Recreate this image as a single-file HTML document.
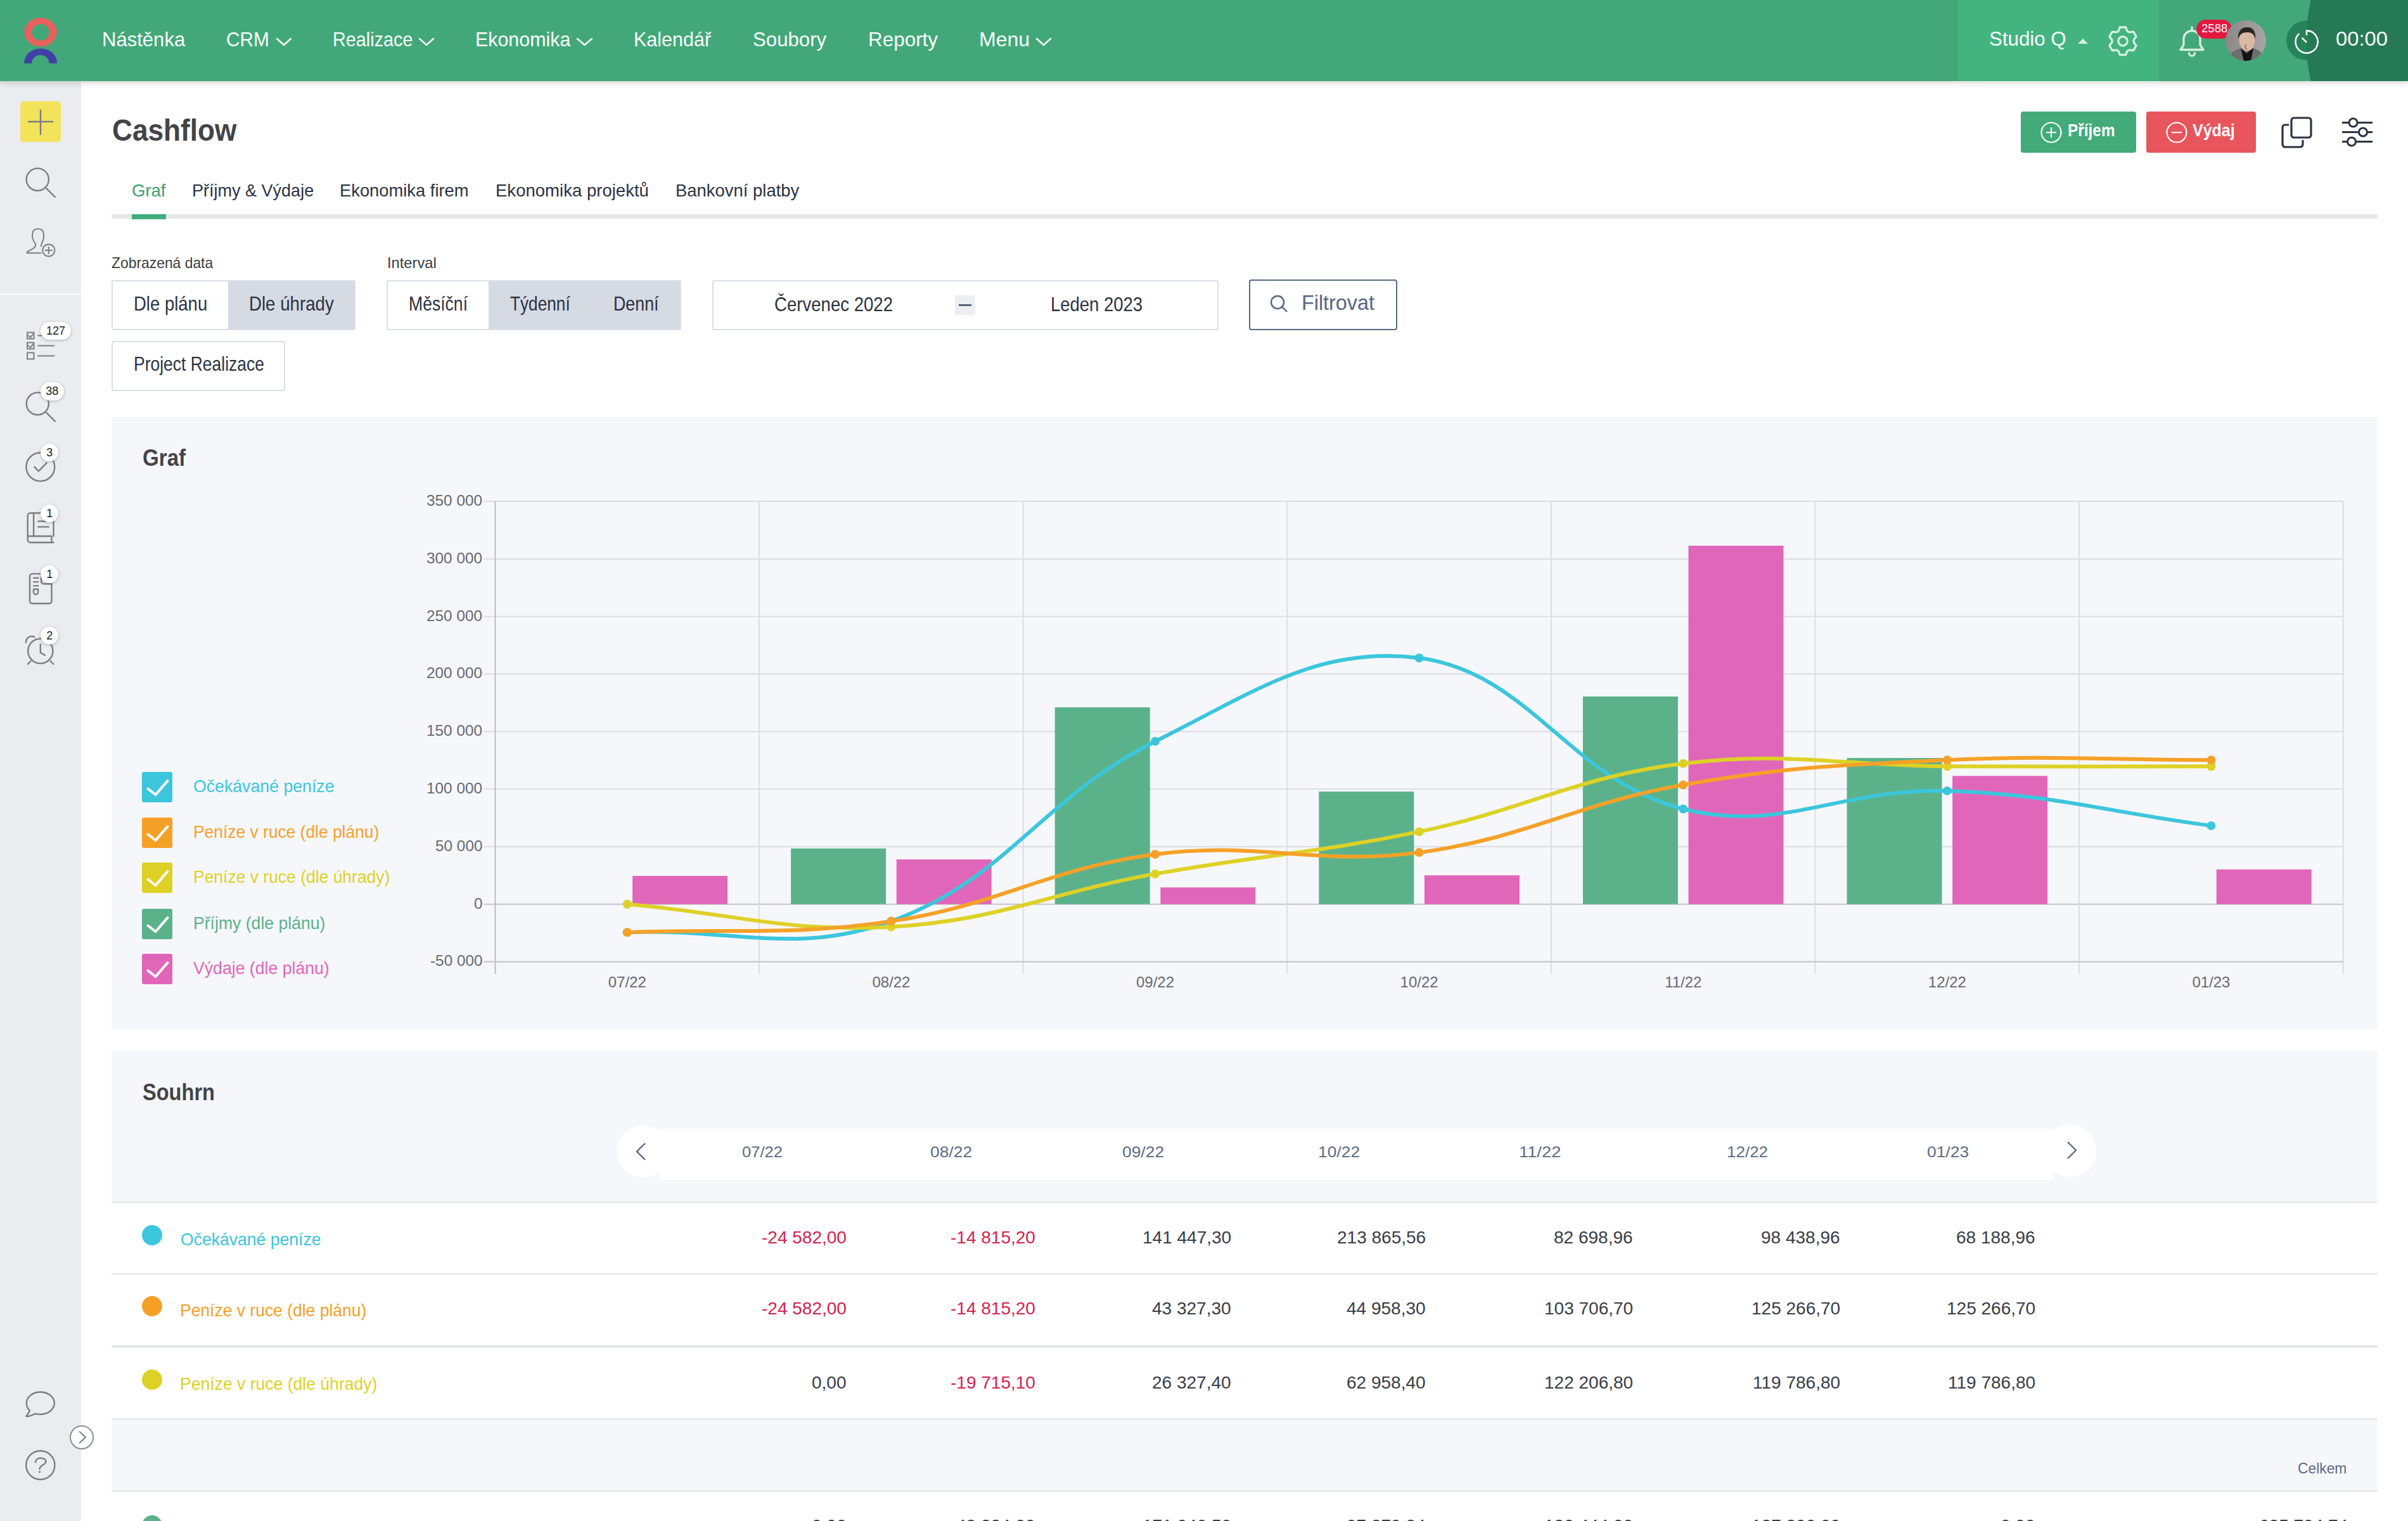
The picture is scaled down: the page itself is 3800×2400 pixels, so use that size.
<!DOCTYPE html><html><head><meta charset="utf-8"><style>
*{box-sizing:border-box;margin:0;padding:0}
html,body{width:3800px;height:2400px;overflow:hidden;background:#fff;font-family:"Liberation Sans",sans-serif;position:relative}
.a{position:absolute}
.t{position:absolute;white-space:nowrap;line-height:1.117;transform-origin:0 0}
@media (max-width:2000px){html{zoom:0.5}}
</style></head><body><div class="a" style="left:0;top:0;width:3800px;height:128px;background:#42a879;box-shadow:0 3px 9px rgba(0,0,0,0.16);z-index:2"></div>
<div class="a" style="left:3090px;top:0;width:316px;height:128px;background:#43b47f;z-index:2"></div>
<svg class="a" style="left:3580px;top:0;z-index:2" width="220" height="128"><circle cx="59.2" cy="63.7" r="31.2" fill="#278259"/><path d="M66.4,0 L61.3,30 L61.3,98 L66.4,128 H220 V0Z" fill="#257955"/></svg>
<div style="position:absolute;left:0;top:0;width:3800px;height:128px;z-index:3">
<svg class="a" style="left:0;top:0" width="128" height="128"><path fill="#e8615e" fill-rule="evenodd" d="M38.3,50.7 a25.7,22.8 0 1,0 51.4,0 a25.7,22.8 0 1,0 -51.4,0 Z M50.3,50.9 a13.7,13 0 1,0 27.4,0 a13.7,13 0 1,0 -27.4,0 Z"/><path fill="#4040a6" d="M38.2,100 L38.2,99 A25.9,22.5 0 0,1 90,99 L90,100 L77.4,100 L77.4,99.5 A13.6,12.8 0 0,0 50.2,99.5 L50.2,100 Z"/></svg>
<div class="t" style="left:161.0px;top:45.0px;font-size:32px;color:#ffffff;transform:scaleX(0.9704);">Nástěnka</div>
<div class="t" style="left:357.0px;top:45.0px;font-size:32px;color:#ffffff;transform:scaleX(0.9315);">CRM</div>
<svg class="a" style="left:433px;top:57px" width="30" height="18"><path d="M4,4 L15.0,14 L26,4" fill="none" stroke="#ffffff" stroke-width="2.5" stroke-linecap="round" stroke-linejoin="round"/></svg>
<div class="t" style="left:525.0px;top:45.0px;font-size:32px;color:#ffffff;transform:scaleX(0.9007);">Realizace</div>
<svg class="a" style="left:658px;top:57px" width="30" height="18"><path d="M4,4 L15.0,14 L26,4" fill="none" stroke="#ffffff" stroke-width="2.5" stroke-linecap="round" stroke-linejoin="round"/></svg>
<div class="t" style="left:750.0px;top:45.0px;font-size:32px;color:#ffffff;transform:scaleX(0.9497);">Ekonomika</div>
<svg class="a" style="left:907px;top:57px" width="31" height="18"><path d="M4,4 L15.5,14 L27,4" fill="none" stroke="#ffffff" stroke-width="2.5" stroke-linecap="round" stroke-linejoin="round"/></svg>
<div class="t" style="left:1000.0px;top:45.0px;font-size:32px;color:#ffffff;transform:scaleX(0.9535);">Kalendář</div>
<div class="t" style="left:1188.0px;top:45.0px;font-size:32px;color:#ffffff;transform:scaleX(0.9748);">Soubory</div>
<div class="t" style="left:1370.0px;top:45.0px;font-size:32px;color:#ffffff;transform:scaleX(0.9821);">Reporty</div>
<div class="t" style="left:1545.0px;top:45.0px;font-size:32px;color:#ffffff;transform:scaleX(1.0000);">Menu</div>
<svg class="a" style="left:1632px;top:57px" width="30" height="18"><path d="M4,4 L15.0,14 L26,4" fill="none" stroke="#ffffff" stroke-width="2.5" stroke-linecap="round" stroke-linejoin="round"/></svg>
<div class="t" style="left:3139.0px;top:44.0px;font-size:32px;color:#ffffff;transform:scaleX(0.9760);">Studio Q</div>
<svg class="a" style="left:3279px;top:61px" width="16" height="8"><path d="M0,8 L8,0 L16,8Z" fill="#d8f0e2"/></svg>
<svg class="a" style="left:3310px;top:24px" width="80" height="80"><path d="M32.99,25.14 L35.57,18.99 L44.43,18.99 L47.01,25.14 A16.5,16.5 0 0 1 50.09,26.92 L56.71,26.09 L61.14,33.76 L57.11,39.07 A16.5,16.5 0 0 1 57.11,42.63 L61.14,47.94 L56.71,55.61 L50.09,54.78 A16.5,16.5 0 0 1 47.01,56.56 L44.43,62.71 L35.57,62.71 L32.99,56.56 A16.5,16.5 0 0 1 29.91,54.78 L23.29,55.61 L18.86,47.94 L22.89,42.63 A16.5,16.5 0 0 1 22.89,39.07 L18.86,33.76 L23.29,26.09 L29.91,26.92 A16.5,16.5 0 0 1 32.99,25.14Z" fill="none" stroke="#d8f0e2" stroke-width="3.3" stroke-linejoin="round"/><circle cx="40" cy="40.85" r="7.2" fill="none" stroke="#d8f0e2" stroke-width="3.3"/></svg>
<svg class="a" style="left:3432px;top:38px" width="54" height="54" viewBox="0 0 24 24"><path fill="none" stroke="#d8f0e2" stroke-width="1.45" stroke-linecap="round" stroke-linejoin="round" d="M12 2.2v1.3M6.2 10.5a5.8 5.8 0 0 1 11.6 0v4.2l2.2 3.3H4l2.2-3.3z M10 20.3a2 2 0 0 0 4 0"/></svg>
<div class="a" style="left:3466px;top:31px;width:56px;height:30px;border-radius:15px;background:#e3173f"></div>
<div class="t" style="left:3474.0px;top:33.8px;font-size:19px;color:#ffffff;transform:scaleX(0.9762);">2588</div>
<svg class="a" style="left:3512px;top:32px" width="64" height="64"><defs><clipPath id="av"><circle cx="32" cy="32" r="32"/></clipPath><linearGradient id="avg" x1="0" x2="1"><stop offset="0" stop-color="#8a8888"/><stop offset="1" stop-color="#a9a5a4"/></linearGradient></defs><g clip-path="url(#av)"><rect width="64" height="64" fill="url(#avg)"/><path d="M2,64 C6,52 14,47 24,44 L33,50 L44,44 C54,47 60,52 62,64Z" fill="#6e6e6e"/><path d="M24,44 L29,64 L40,64 L44,44 L33,52Z" fill="#121212"/><ellipse cx="34" cy="31" rx="12.5" ry="17" fill="#d9b9a4"/><path d="M33,38 C30,42 30,44 34,45" fill="none" stroke="#8a6a58" stroke-width="1.5"/><path d="M20,30 C19,16 26,11 34,11 C43,11 48,17 47,30 C45,22 42,19 34,19 C27,19 22,22 20,30Z" fill="#2b2421"/></g></svg>
<svg class="a" style="left:3616px;top:42px" width="48" height="48" viewBox="0 0 24 24"><path fill="none" stroke="#fff" stroke-width="1.3" stroke-linecap="round" d="M12 3.2a8.8 8.8 0 1 1-6.2 2.6 M12 3.2v3 M8.6 9.2l3 2.8"/></svg>
<div class="t" style="left:3686.0px;top:44.0px;font-size:32px;color:#ffffff;transform:scaleX(1.0250);">00:00</div>
</div>
<div class="a" style="left:0;top:128px;width:128px;height:2272px;background:#ebecef"></div>
<div class="a" style="left:32px;top:160px;width:64px;height:64px;border-radius:5px;background:#f2e35a"></div>
<svg class="a" style="left:32px;top:160px" width="64" height="64"><path d="M32,14 V52 M13,32 H51" stroke="#7a7d81" stroke-width="2.4" stroke-linecap="round"/></svg>
<div class="a" style="left:0;top:463px;width:128px;height:2px;background:#fbfbfc"></div>
<svg class="a" style="left:0;top:0" width="128" height="2400" fill="none" stroke="#7a7d81" stroke-width="2.4" stroke-linecap="round" stroke-linejoin="round"><circle cx="59.3" cy="283.2" r="17.6"/><path d="M73.3,297.4 L86.9,311"/><path d="M64.7,388.5 C65,386 65.5,385 66,383.8 C67.5,381 68.3,378.5 68.5,376 C69.5,374 69,371 68.8,370 C69,364 65,361 59.9,361 C54.8,361 51,364 51.4,370 C51,371 50.5,374 51.7,376 C52,379 54,382 55.5,383.8 C56,385 56.1,386 56.1,387.3 C55,392 51,393 47,395 C44,396.5 42.5,398 42.5,399.2 H64.7" stroke-width="2"/><circle cx="76.8" cy="395" r="9.6" stroke-width="2"/><path d="M76.8,389.7 V400.3 M71.5,395 H82.1" stroke-width="2"/><g stroke-width="2"><rect x="43" y="524.5" width="10.5" height="10"/><rect x="43" y="540.5" width="10.5" height="10"/><rect x="43" y="556.5" width="10.5" height="10"/><path d="M45,529.5 l3,3 4,-5.5 M45,545.5 l3,3 4,-5.5 M60,529.4 H85.5 M60,545.5 H85.5 M60,561.4 H85.5"/></g><circle cx="59.3" cy="637" r="17.6"/><path d="M73.3,651.2 L86.9,664.8"/><circle cx="63.8" cy="736.7" r="22.4"/><path d="M54.3,736.7 L60.8,743.3 L73.5,730.6"/><path d="M84.5,846 V814 a4.5,4.5 0 0 0 -4.5,-4.5 H48.2 a4.5,4.5 0 0 0 -4.5,4.5 V851.5 a4.5,4.5 0 0 0 4.5,4.5 H84.5 M53.1,809.5 V846 M45,846 H81.5 V856 M60.2,822.5 H72.7 M60.2,831.4 H76.8"/><path d="M65,905.4 H51 a4,4 0 0 0 -4,4 V948.2 a4,4 0 0 0 4,4 H77.5 a4,4 0 0 0 4,-4 V921.4 H69 a4,4 0 0 1 -4,-4 Z M53.1,912 H60.2 M53.1,918.1 H60.2 M53.1,924.4 H60.2 M53,929.7 H60 V934.5 a3.5,3.5 0 0 1 -7,0 Z"/><circle cx="63.8" cy="1027.3" r="19.6"/><path d="M63.8,1016.7 V1029.7 L70.9,1033.8 M40.9,1013.7 a9.5,9.5 0 0 1 13.4,-8.8 M43.7,1048 L48.4,1043.3 M84.5,1048 L79.8,1043.3"/><path d="M46.8,2225.8 C43.5,2222.5 41.8,2218.5 41.8,2214.1 C41.8,2204.4 51.6,2196.5 63.8,2196.5 S85.8,2204.4 85.8,2214.1 S76,2231.7 63.8,2231.7 C60.8,2231.7 58,2231.4 55.2,2230.9 C51,2233 45,2235.5 41.2,2234.8 C43.5,2232 45.8,2229 46.8,2225.8 Z"/><circle cx="63.8" cy="2311.9" r="22.6"/><path d="M56,2307.2 C56,2303 59.5,2300.7 64.1,2300.7 C68.8,2300.7 72.4,2303 72.4,2306.5 C72.4,2311 62.5,2312 62.5,2318"/><circle cx="62.5" cy="2322.6" r="1.6" fill="#7a7d81" stroke="none"/></svg>
<div class="a" style="left:64.0px;top:508.0px;width:48px;height:28px;border-radius:14.0px;background:#fff;box-shadow:0 1px 4px rgba(0,0,0,.28);color:#1d1d1d;font-size:18px;line-height:28px;text-align:center">127</div>
<div class="a" style="left:63.8px;top:603.3px;width:37px;height:29px;border-radius:14.5px;background:#fff;box-shadow:0 1px 4px rgba(0,0,0,.28);color:#1d1d1d;font-size:18px;line-height:29px;text-align:center">38</div>
<div class="a" style="left:64.3px;top:700.3px;width:28px;height:28px;border-radius:14.0px;background:#fff;box-shadow:0 1px 4px rgba(0,0,0,.28);color:#1d1d1d;font-size:18px;line-height:28px;text-align:center">3</div>
<div class="a" style="left:64.3px;top:796.1px;width:28px;height:28px;border-radius:14.0px;background:#fff;box-shadow:0 1px 4px rgba(0,0,0,.28);color:#1d1d1d;font-size:18px;line-height:28px;text-align:center">1</div>
<div class="a" style="left:64.3px;top:892.0px;width:28px;height:28px;border-radius:14.0px;background:#fff;box-shadow:0 1px 4px rgba(0,0,0,.28);color:#1d1d1d;font-size:18px;line-height:28px;text-align:center">1</div>
<div class="a" style="left:64.3px;top:988.5px;width:28px;height:28px;border-radius:14.0px;background:#fff;box-shadow:0 1px 4px rgba(0,0,0,.28);color:#1d1d1d;font-size:18px;line-height:28px;text-align:center">2</div>
<div class="a" style="left:110px;top:2249px;width:38px;height:38px;border-radius:50%;background:#fff;border:2px solid #8a8d91"></div>
<svg class="a" style="left:0;top:2200px" width="160" height="100"><path d="M125.1,58.8 L135.1,67.7 L125.1,77.2" fill="none" stroke="#7a7d81" stroke-width="2"/></svg>
<div class="t" style="left:177.0px;top:178.6px;font-size:48px;color:#424448;font-weight:bold;transform:scaleX(0.9206);">Cashflow</div>
<div class="t" style="left:208.0px;top:284.7px;font-size:28px;color:#3f9e72;transform:scaleX(0.9818);">Graf</div>
<div class="t" style="left:303.0px;top:284.7px;font-size:28px;color:#2c3341;transform:scaleX(0.9648);">Příjmy &amp; Výdaje</div>
<div class="t" style="left:536.0px;top:284.7px;font-size:28px;color:#2c3341;transform:scaleX(0.9761);">Ekonomika firem</div>
<div class="t" style="left:782.0px;top:284.7px;font-size:28px;color:#2c3341;transform:scaleX(0.9837);">Ekonomika projektů</div>
<div class="t" style="left:1066.0px;top:284.7px;font-size:28px;color:#2c3341;transform:scaleX(0.9799);">Bankovní platby</div>
<div class="a" style="left:176px;top:338px;width:3576px;height:7px;background:#e6e7e9"></div>
<div class="a" style="left:208px;top:338px;width:54px;height:8px;background:#3fae7b"></div>
<div class="a" style="left:3189px;top:176px;width:182px;height:65px;border-radius:4px;background:#43aa79"></div>
<div class="a" style="left:3387px;top:176px;width:173px;height:65px;border-radius:4px;background:#e8555d"></div>
<svg class="a" style="left:3219px;top:191px" width="36" height="36"><circle cx="18" cy="18" r="15.5" fill="none" stroke="#fff" stroke-width="2.2"/><path d="M18,10 V26 M10,18 H26" stroke="#fff" stroke-width="2.2"/></svg>
<svg class="a" style="left:3417px;top:191px" width="36" height="36"><circle cx="18" cy="18" r="15.5" fill="none" stroke="#fff" stroke-width="2.2"/><path d="M10,18 H26" stroke="#fff" stroke-width="2.2"/></svg>
<div class="t" style="left:3263.0px;top:189.7px;font-size:28px;color:#ffffff;font-weight:bold;transform:scaleX(0.8721);">Příjem</div>
<div class="t" style="left:3460.0px;top:189.7px;font-size:28px;color:#ffffff;font-weight:bold;transform:scaleX(0.8933);">Výdaj</div>
<svg class="a" style="left:3596px;top:181px" width="56" height="56"><rect x="20" y="5" width="31" height="31" rx="4" fill="none" stroke="#2c3341" stroke-width="3.2"/><path d="M16,16 H10 a4,4 0 0 0 -4,4 V47 a4,4 0 0 0 4,4 H34 a4,4 0 0 0 4,-4 V40" fill="none" stroke="#2c3341" stroke-width="3.2"/></svg>
<svg class="a" style="left:3692px;top:182px" width="56" height="52"><path d="M4,11.5 H52 M4,26.5 H52 M4,41.5 H52" stroke="#2c3341" stroke-width="3"/><circle cx="21.5" cy="11.5" r="6.5" fill="#fff" stroke="#2c3341" stroke-width="3"/><circle cx="37" cy="26.5" r="6.5" fill="#fff" stroke="#2c3341" stroke-width="3"/><circle cx="19" cy="41.5" r="6.5" fill="#fff" stroke="#2c3341" stroke-width="3"/></svg>
<div class="t" style="left:176.0px;top:402.3px;font-size:24px;color:#3b3e43;transform:scaleX(0.9527);">Zobrazená data</div>
<div class="t" style="left:611.0px;top:402.3px;font-size:24px;color:#3b3e43;transform:scaleX(0.9873);">Interval</div>
<div class="a" style="left:176px;top:442px;width:385px;height:79px;border:2px solid #dcdfe4;border-radius:3px;background:#fff;overflow:hidden"><div class="a" style="left:182px;top:0;width:203px;height:79px;background:#d5dae3"></div></div>
<div class="t" style="left:211.0px;top:462.0px;font-size:32px;color:#2c3341;transform:scaleX(0.8593);">Dle plánu</div>
<div class="t" style="left:393.0px;top:462.0px;font-size:32px;color:#2c3341;transform:scaleX(0.8645);">Dle úhrady</div>
<div class="a" style="left:610px;top:442px;width:465px;height:79px;border:2px solid #dcdfe4;border-radius:3px;background:#fff;overflow:hidden"><div class="a" style="left:159px;top:0;width:310px;height:79px;background:#d5dae3"></div></div>
<div class="t" style="left:645.0px;top:462.0px;font-size:32px;color:#2c3341;transform:scaleX(0.8304);">Měsíční</div>
<div class="t" style="left:805.0px;top:462.0px;font-size:32px;color:#2c3341;transform:scaleX(0.8190);">Týdenní</div>
<div class="t" style="left:968.0px;top:462.0px;font-size:32px;color:#2c3341;transform:scaleX(0.8372);">Denní</div>
<div class="a" style="left:176px;top:538px;width:274px;height:79px;border:2px solid #dcdfe4;border-radius:3px;background:#fff"></div>
<div class="t" style="left:211.0px;top:557.0px;font-size:32px;color:#2c3341;transform:scaleX(0.8273);">Project Realizace</div>
<div class="a" style="left:1124px;top:442px;width:799px;height:79px;border:2px solid #dcdfe4;border-radius:3px;background:#fff"></div>
<div class="t" style="left:1222.0px;top:462.5px;font-size:32px;color:#2c3341;transform:scaleX(0.8618);">Červenec 2022</div>
<div class="t" style="left:1658.0px;top:462.5px;font-size:32px;color:#2c3341;transform:scaleX(0.8580);">Leden 2023</div>
<div class="a" style="left:1507px;top:466px;width:32px;height:31px;border-radius:3px;background:#eceef2"></div>
<div class="a" style="left:1513px;top:480px;width:20px;height:3px;background:#56667f"></div>
<div class="a" style="left:1971px;top:441px;width:234px;height:80px;border:2.5px solid #5a6a83;border-radius:4px;background:#fff"></div>
<svg class="a" style="left:2004px;top:464px" width="32" height="32"><circle cx="12" cy="13" r="10" fill="none" stroke="#56667f" stroke-width="2.4"/><path d="M19,20 L27,28" stroke="#56667f" stroke-width="2.4"/></svg>
<div class="t" style="left:2054.0px;top:459.2px;font-size:34px;color:#56667f;transform:scaleX(0.9504);">Filtrovat</div>
<div class="a" style="left:176px;top:658px;width:3576px;height:966px;background:#f6f7fb"></div>
<div class="t" style="left:225.0px;top:703.4px;font-size:36px;color:#424448;font-weight:bold;transform:scaleX(0.9200);">Graf</div>
<div class="a" style="left:224px;top:1218px;width:48px;height:48px;border-radius:3px;background:#3cc6dc"></div>
<svg class="a" style="left:224px;top:1218px" width="48" height="48"><path d="M9.5,26.5 L21.5,36 L40.5,14" fill="none" stroke="#fff" stroke-width="4" stroke-linecap="round" stroke-linejoin="round"/></svg>
<div class="t" style="left:305.0px;top:1224.7px;font-size:28px;color:#3cc6dc;transform:scaleX(0.9530);">Očekávané peníze</div>
<div class="a" style="left:224px;top:1290px;width:48px;height:48px;border-radius:3px;background:#f5a128"></div>
<svg class="a" style="left:224px;top:1290px" width="48" height="48"><path d="M9.5,26.5 L21.5,36 L40.5,14" fill="none" stroke="#fff" stroke-width="4" stroke-linecap="round" stroke-linejoin="round"/></svg>
<div class="t" style="left:305.0px;top:1296.7px;font-size:28px;color:#f5a128;transform:scaleX(0.9421);">Peníze v ruce (dle plánu)</div>
<div class="a" style="left:224px;top:1361px;width:48px;height:48px;border-radius:3px;background:#ddd126"></div>
<svg class="a" style="left:224px;top:1361px" width="48" height="48"><path d="M9.5,26.5 L21.5,36 L40.5,14" fill="none" stroke="#fff" stroke-width="4" stroke-linecap="round" stroke-linejoin="round"/></svg>
<div class="t" style="left:305.0px;top:1367.7px;font-size:28px;color:#ddd126;transform:scaleX(0.9451);">Peníze v ruce (dle úhrady)</div>
<div class="a" style="left:224px;top:1434px;width:48px;height:48px;border-radius:3px;background:#5bb28a"></div>
<svg class="a" style="left:224px;top:1434px" width="48" height="48"><path d="M9.5,26.5 L21.5,36 L40.5,14" fill="none" stroke="#fff" stroke-width="4" stroke-linecap="round" stroke-linejoin="round"/></svg>
<div class="t" style="left:305.0px;top:1440.7px;font-size:28px;color:#5bb28a;transform:scaleX(0.9498);">Příjmy (dle plánu)</div>
<div class="a" style="left:224px;top:1505px;width:48px;height:48px;border-radius:3px;background:#e066b9"></div>
<svg class="a" style="left:224px;top:1505px" width="48" height="48"><path d="M9.5,26.5 L21.5,36 L40.5,14" fill="none" stroke="#fff" stroke-width="4" stroke-linecap="round" stroke-linejoin="round"/></svg>
<div class="t" style="left:305.0px;top:1511.7px;font-size:28px;color:#e066b9;transform:scaleX(0.9513);">Výdaje (dle plánu)</div>
<svg class="a" style="left:0;top:0" width="3800" height="2400"><path d="M763.5,1517.5 H3697.5" stroke="#dcdde2" stroke-width="2"/><path d="M763.5,1426.7 H3697.5" stroke="#c4c6cc" stroke-width="2"/><path d="M763.5,1335.9 H3697.5" stroke="#dcdde2" stroke-width="2"/><path d="M763.5,1245.1 H3697.5" stroke="#dcdde2" stroke-width="2"/><path d="M763.5,1154.3 H3697.5" stroke="#dcdde2" stroke-width="2"/><path d="M763.5,1063.5 H3697.5" stroke="#dcdde2" stroke-width="2"/><path d="M763.5,972.7 H3697.5" stroke="#dcdde2" stroke-width="2"/><path d="M763.5,881.9 H3697.5" stroke="#dcdde2" stroke-width="2"/><path d="M763.5,791.1 H3697.5" stroke="#dcdde2" stroke-width="2"/><path d="M781.5,791.1 V1537" stroke="#b8bbc1" stroke-width="2"/><path d="M1198.1,791.1 V1537" stroke="#dcdde2" stroke-width="2"/><path d="M1614.7,791.1 V1537" stroke="#dcdde2" stroke-width="2"/><path d="M2031.3,791.1 V1537" stroke="#dcdde2" stroke-width="2"/><path d="M2447.9,791.1 V1537" stroke="#dcdde2" stroke-width="2"/><path d="M2864.5,791.1 V1537" stroke="#dcdde2" stroke-width="2"/><path d="M3281.1,791.1 V1537" stroke="#dcdde2" stroke-width="2"/><path d="M3697.7,791.1 V1537" stroke="#dcdde2" stroke-width="2"/><path d="M763.5,1517.5 H3697.5" stroke="#c4c6cc" stroke-width="2"/><rect x="998.1" y="1382.1" width="150" height="44.6" fill="#e066b9"/><rect x="1248.1" y="1338.8" width="150" height="87.9" fill="#5bb28a"/><rect x="1414.7" y="1356.1" width="150" height="70.6" fill="#e066b9"/><rect x="1664.7" y="1116.1" width="150" height="310.6" fill="#5bb28a"/><rect x="1831.3" y="1400.3" width="150" height="26.4" fill="#e066b9"/><rect x="2081.3" y="1249.0" width="150" height="177.7" fill="#5bb28a"/><rect x="2247.9" y="1381.2" width="150" height="45.5" fill="#e066b9"/><rect x="2497.9" y="1099.0" width="150" height="327.7" fill="#5bb28a"/><rect x="2664.5" y="861.1" width="150" height="565.6" fill="#e066b9"/><rect x="2914.5" y="1196.0" width="150" height="230.7" fill="#5bb28a"/><rect x="3081.1" y="1224.3" width="150" height="202.4" fill="#e066b9"/><rect x="3497.7" y="1371.9" width="150" height="54.8" fill="#e066b9"/><path d="M989.8,1471.3 C1156.4,1464.2 1255.5,1508.2 1406.4,1453.6 C1588.8,1387.6 1644.5,1258.8 1823.0,1169.8 C1977.7,1092.7 2080.8,1018.0 2239.6,1038.3 C2414.1,1060.7 2478.0,1231.7 2656.2,1276.5 C2811.3,1315.5 2906.7,1242.7 3072.8,1247.9 C3240.0,1253.2 3322.8,1280.9 3489.4,1302.9" fill="none" stroke="#3cc6dc" stroke-width="6"/><circle cx="989.8" cy="1471.3" r="7" fill="#3cc6dc"/><circle cx="1406.4" cy="1453.6" r="7" fill="#3cc6dc"/><circle cx="1823.0" cy="1169.8" r="7" fill="#3cc6dc"/><circle cx="2239.6" cy="1038.3" r="7" fill="#3cc6dc"/><circle cx="2656.2" cy="1276.5" r="7" fill="#3cc6dc"/><circle cx="3072.8" cy="1247.9" r="7" fill="#3cc6dc"/><circle cx="3489.4" cy="1302.9" r="7" fill="#3cc6dc"/><path d="M989.8,1426.7 C1156.4,1441.0 1241.1,1472.0 1406.4,1462.5 C1574.4,1452.9 1655.8,1409.0 1823.0,1378.9 C1989.0,1349.0 2074.6,1346.8 2239.6,1312.4 C2407.9,1277.2 2486.9,1225.7 2656.2,1204.8 C2820.2,1184.5 2906.2,1208.3 3072.8,1209.2 C3239.4,1210.0 3322.8,1209.2 3489.4,1209.2" fill="none" stroke="#ddd126" stroke-width="6"/><circle cx="989.8" cy="1426.7" r="7" fill="#ddd126"/><circle cx="1406.4" cy="1462.5" r="7" fill="#ddd126"/><circle cx="1823.0" cy="1378.9" r="7" fill="#ddd126"/><circle cx="2239.6" cy="1312.4" r="7" fill="#ddd126"/><circle cx="2656.2" cy="1204.8" r="7" fill="#ddd126"/><circle cx="3072.8" cy="1209.2" r="7" fill="#ddd126"/><circle cx="3489.4" cy="1209.2" r="7" fill="#ddd126"/><path d="M989.8,1471.3 C1156.4,1464.2 1242.3,1477.9 1406.4,1453.6 C1575.6,1428.6 1653.8,1370.1 1823.0,1348.0 C1987.0,1326.6 2075.6,1366.6 2239.6,1345.1 C2408.9,1322.8 2487.3,1267.9 2656.2,1238.4 C2820.6,1209.6 2905.8,1207.1 3072.8,1199.2 C3239.1,1191.4 3322.8,1199.2 3489.4,1199.2" fill="none" stroke="#f5a128" stroke-width="6"/><circle cx="989.8" cy="1471.3" r="7" fill="#f5a128"/><circle cx="1406.4" cy="1453.6" r="7" fill="#f5a128"/><circle cx="1823.0" cy="1348.0" r="7" fill="#f5a128"/><circle cx="2239.6" cy="1345.1" r="7" fill="#f5a128"/><circle cx="2656.2" cy="1238.4" r="7" fill="#f5a128"/><circle cx="3072.8" cy="1199.2" r="7" fill="#f5a128"/><circle cx="3489.4" cy="1199.2" r="7" fill="#f5a128"/></svg>
<div class="t" style="left:679.3px;top:1503.3px;font-size:24px;color:#666a70;transform:scaleX(1.015)">-50 000</div>
<div class="t" style="left:748.3px;top:1412.5px;font-size:24px;color:#666a70;transform:scaleX(1.015)">0</div>
<div class="t" style="left:687.4px;top:1321.7px;font-size:24px;color:#666a70;transform:scaleX(1.015)">50 000</div>
<div class="t" style="left:673.2px;top:1230.9px;font-size:24px;color:#666a70;transform:scaleX(1.015)">100 000</div>
<div class="t" style="left:673.2px;top:1140.1px;font-size:24px;color:#666a70;transform:scaleX(1.015)">150 000</div>
<div class="t" style="left:673.2px;top:1049.3px;font-size:24px;color:#666a70;transform:scaleX(1.015)">200 000</div>
<div class="t" style="left:673.2px;top:958.5px;font-size:24px;color:#666a70;transform:scaleX(1.015)">250 000</div>
<div class="t" style="left:673.2px;top:867.7px;font-size:24px;color:#666a70;transform:scaleX(1.015)">300 000</div>
<div class="t" style="left:673.2px;top:776.9px;font-size:24px;color:#666a70;transform:scaleX(1.015)">350 000</div>
<div class="t" style="left:959.8px;top:1537.3px;font-size:24px;color:#666a70">07/22</div>
<div class="t" style="left:1376.4px;top:1537.3px;font-size:24px;color:#666a70">08/22</div>
<div class="t" style="left:1793.0px;top:1537.3px;font-size:24px;color:#666a70">09/22</div>
<div class="t" style="left:2209.6px;top:1537.3px;font-size:24px;color:#666a70">10/22</div>
<div class="t" style="left:2627.2px;top:1537.3px;font-size:24px;color:#666a70">11/22</div>
<div class="t" style="left:3042.8px;top:1537.3px;font-size:24px;color:#666a70">12/22</div>
<div class="t" style="left:3459.4px;top:1537.3px;font-size:24px;color:#666a70">01/23</div>
<div class="a" style="left:176px;top:1658px;width:3576px;height:742px;background:#f6f7fb"></div>
<div class="t" style="left:225.0px;top:1704.4px;font-size:36px;color:#424448;font-weight:bold;transform:scaleX(0.9048);">Souhrn</div>
<div class="a" style="left:1040px;top:1781px;width:2200px;height:81px;background:#fff"></div>
<div class="a" style="left:974px;top:1776px;width:82px;height:82px;border-radius:50%;background:#fff"></div>
<div class="a" style="left:3226px;top:1775px;width:82px;height:82px;border-radius:50%;background:#fff"></div>
<svg class="a" style="left:1000px;top:1800px" width="40" height="40"><path d="M18,4 L5,17 L18,30" fill="none" stroke="#5b6b84" stroke-width="2.4"/></svg>
<svg class="a" style="left:3250px;top:1798px" width="40" height="40"><path d="M13,4 L26,17 L13,30" fill="none" stroke="#5b6b84" stroke-width="2.4"/></svg>
<div class="t" style="left:1171.0px;top:1805.3px;font-size:24px;color:#5b6b84;transform:scaleX(1.0667);">07/22</div>
<div class="t" style="left:1468.0px;top:1805.3px;font-size:24px;color:#5b6b84;transform:scaleX(1.1000);">08/22</div>
<div class="t" style="left:1771.0px;top:1805.3px;font-size:24px;color:#5b6b84;transform:scaleX(1.1000);">09/22</div>
<div class="t" style="left:2080.0px;top:1805.3px;font-size:24px;color:#5b6b84;transform:scaleX(1.1000);">10/22</div>
<div class="t" style="left:2397.0px;top:1805.3px;font-size:24px;color:#5b6b84;transform:scaleX(1.1379);">11/22</div>
<div class="t" style="left:2725.0px;top:1805.3px;font-size:24px;color:#5b6b84;transform:scaleX(1.0833);">12/22</div>
<div class="t" style="left:3041.0px;top:1805.3px;font-size:24px;color:#5b6b84;transform:scaleX(1.1000);">01/23</div>
<div class="a" style="left:176px;top:1896px;width:3576px;height:456px;background:#fff"></div>
<div class="a" style="left:176px;top:1896px;width:3576px;height:2px;background:#e3e5e9"></div>
<div class="a" style="left:176px;top:2009px;width:3576px;height:2px;background:#e3e5e9"></div>
<div class="a" style="left:176px;top:2123px;width:3576px;height:3px;background:#dde0e4"></div>
<div class="a" style="left:176px;top:2238px;width:3576px;height:2px;background:#e3e5e9"></div>
<div class="a" style="left:176px;top:2352px;width:3576px;height:2px;background:#e3e5e9"></div>
<div class="a" style="left:176px;top:2240px;width:3576px;height:112px;background:#f6f7fb"></div>
<div class="a" style="left:176px;top:2354px;width:3576px;height:46px;background:#fff"></div>
<div class="a" style="left:224px;top:1933px;width:32px;height:32px;border-radius:50%;background:#3cc6dc"></div>
<div class="t" style="left:285.0px;top:1939.7px;font-size:28px;color:#3cc6dc;transform:scaleX(0.9487);">Očekávané peníze</div>
<div class="t" style="left:1202.0px;top:1936.7px;font-size:28px;color:#d3234f">-24 582,00</div>
<div class="t" style="left:1500.0px;top:1936.7px;font-size:28px;color:#d3234f">-14 815,20</div>
<div class="t" style="left:1803.0px;top:1936.7px;font-size:28px;color:#383d47">141 447,30</div>
<div class="t" style="left:2110.0px;top:1936.7px;font-size:28px;color:#383d47">213 865,56</div>
<div class="t" style="left:2452.0px;top:1936.7px;font-size:28px;color:#383d47">82 698,96</div>
<div class="t" style="left:2779.0px;top:1936.7px;font-size:28px;color:#383d47">98 438,96</div>
<div class="t" style="left:3087.0px;top:1936.7px;font-size:28px;color:#383d47">68 188,96</div>
<div class="a" style="left:224px;top:2045px;width:32px;height:32px;border-radius:50%;background:#f5a128"></div>
<div class="t" style="left:284.0px;top:2051.7px;font-size:28px;color:#f5a128;transform:scaleX(0.9453);">Peníze v ruce (dle plánu)</div>
<div class="t" style="left:1202.0px;top:2048.7px;font-size:28px;color:#d3234f">-24 582,00</div>
<div class="t" style="left:1500.0px;top:2048.7px;font-size:28px;color:#d3234f">-14 815,20</div>
<div class="t" style="left:1818.0px;top:2048.7px;font-size:28px;color:#383d47">43 327,30</div>
<div class="t" style="left:2125.0px;top:2048.7px;font-size:28px;color:#383d47">44 958,30</div>
<div class="t" style="left:2437.0px;top:2048.7px;font-size:28px;color:#383d47">103 706,70</div>
<div class="t" style="left:2764.0px;top:2048.7px;font-size:28px;color:#383d47">125 266,70</div>
<div class="t" style="left:3072.0px;top:2048.7px;font-size:28px;color:#383d47">125 266,70</div>
<div class="a" style="left:224px;top:2161px;width:32px;height:32px;border-radius:50%;background:#ddd126"></div>
<div class="t" style="left:284.0px;top:2167.7px;font-size:28px;color:#ddd126;transform:scaleX(0.9482);">Peníze v ruce (dle úhrady)</div>
<div class="t" style="left:1281.0px;top:2165.7px;font-size:28px;color:#383d47">0,00</div>
<div class="t" style="left:1500.0px;top:2165.7px;font-size:28px;color:#d3234f">-19 715,10</div>
<div class="t" style="left:1818.0px;top:2165.7px;font-size:28px;color:#383d47">26 327,40</div>
<div class="t" style="left:2125.0px;top:2165.7px;font-size:28px;color:#383d47">62 958,40</div>
<div class="t" style="left:2437.0px;top:2165.7px;font-size:28px;color:#383d47">122 206,80</div>
<div class="t" style="left:2766.0px;top:2165.7px;font-size:28px;color:#383d47">119 786,80</div>
<div class="t" style="left:3074.0px;top:2165.7px;font-size:28px;color:#383d47">119 786,80</div>
<div class="t" style="left:3626.0px;top:2304.3px;font-size:24px;color:#5b6b84;transform:scaleX(0.9506);">Celkem</div>
<div class="a" style="left:224px;top:2391px;width:32px;height:32px;border-radius:50%;background:#5bb28a"></div>
<div class="t" style="left:1281.0px;top:2391.7px;font-size:28px;color:#383d47">0,00</div>
<div class="t" style="left:1509.0px;top:2391.7px;font-size:28px;color:#383d47">48 384,00</div>
<div class="t" style="left:1803.0px;top:2391.7px;font-size:28px;color:#383d47">171 040,50</div>
<div class="t" style="left:2125.0px;top:2391.7px;font-size:28px;color:#383d47">97 879,84</div>
<div class="t" style="left:2437.0px;top:2391.7px;font-size:28px;color:#383d47">180 444,00</div>
<div class="t" style="left:2764.0px;top:2391.7px;font-size:28px;color:#383d47">127 890,00</div>
<div class="t" style="left:3157.0px;top:2391.7px;font-size:28px;color:#383d47">0,00</div>
<div class="t" style="left:3565.0px;top:2391.7px;font-size:28px;color:#383d47">625 704,74</div></body></html>
